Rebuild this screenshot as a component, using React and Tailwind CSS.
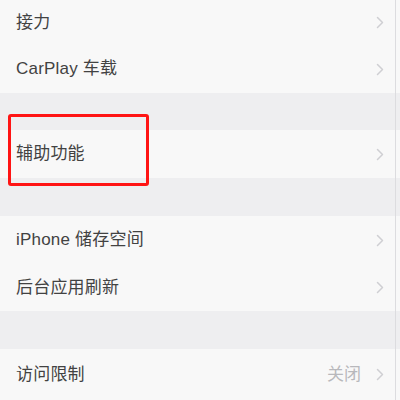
import React from 'react';

const Chevron = () => (
  <svg width="8" height="13" viewBox="0 0 8 13" fill="none" className="shrink-0">
    <path d="M1.5 1.5L6.5 6.5L1.5 11.5" stroke="#cfcfd3" strokeWidth="1.5" strokeLinecap="round" strokeLinejoin="round" />
  </svg>
);

const Row = ({ label, value, height }) => (
  <div className={`flex items-center justify-between bg-[#f8f8f8] pl-4 pr-[16px] ${height}`}>
    <span className="text-[17px] text-[#424242] tracking-[0.2px]">{label}</span>
    <div className="flex items-center gap-[15px]">
      {value && <span className="text-[17px] text-[#b8b8bc]">{value}</span>}
      <Chevron />
    </div>
  </div>
);

const Gap = ({ height }) => <div className={`bg-[#eeeef0] ${height}`} />;

export default function App() {
  return (
    <div
      className="relative w-[400px] h-[400px] overflow-hidden bg-[#eeeef0]"
      style={{ fontFamily: '"Liberation Sans", "Noto Sans CJK SC", sans-serif' }}
    >
      <Row label="接力" height="h-[45px]" />
      <Row label="CarPlay 车载" height="h-[48px]" />
      <Gap height="h-[37px]" />
      <Row label="辅助功能" height="h-[48px]" />
      <Gap height="h-[38px]" />
      <Row label="iPhone 储存空间" height="h-[48px]" />
      <Row label="后台应用刷新" height="h-[47px]" />
      <Gap height="h-[38px]" />
      <Row label="访问限制" value="关闭" height="h-[51px]" />

      {/* highlight box */}
      <div className="absolute left-[8px] top-[114px] w-[141px] h-[72px] border-[3px] border-[#ff1414] rounded-[3px]" />
      {/* scroll edge */}
      <div className="absolute top-0 bottom-0 right-[4px] w-px bg-[#dcdcdf]" />
    </div>
  );
}
